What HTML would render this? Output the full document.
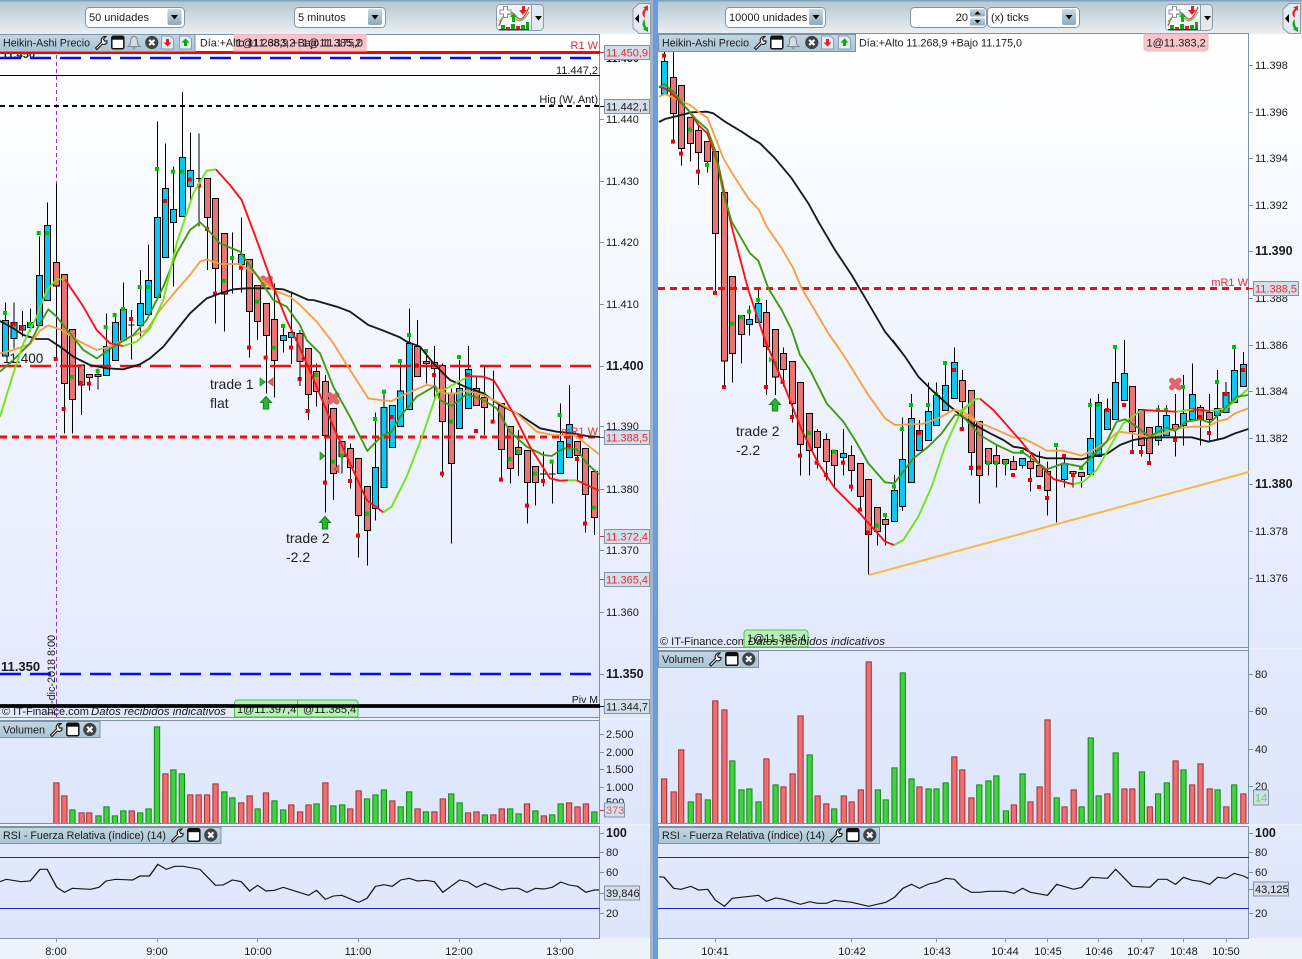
<!DOCTYPE html>
<html><head><meta charset="utf-8"><title>Chart</title>
<style>
html,body{margin:0;padding:0;background:#fff;width:1302px;height:959px;overflow:hidden}
svg{display:block;font-family:"Liberation Sans",sans-serif;font-size:11px;fill:#1a1a1a}
.r{fill:#e8282c}.b{font-weight:bold;font-size:12.5px}.t{font-size:14px;fill:#222}
.g{fill:#5ad85a}.i{font-style:italic}
.bd{stroke:#000;stroke-width:3;shape-rendering:crispEdges}
.wk{stroke:#000;stroke-width:3;fill:none;shape-rendering:crispEdges}
.mk{fill:none;stroke-width:12;stroke-linecap:square}
.ln{fill:none;stroke-width:5.6;stroke-linejoin:round}
.px{fill:#d4deea;stroke:#8094a6}
.pl{fill:none;stroke:#7d92a6}
.hd{fill:url(#hg);stroke:#7d92a6}
</style></head><body>
<svg width="1302" height="959" viewBox="0 0 1302 959" xmlns="http://www.w3.org/2000/svg">
<defs>
<linearGradient id="tg" x1="0" y1="0" x2="0" y2="1"><stop offset="0" stop-color="#b4c6d0"/><stop offset="1" stop-color="#e9f0f4"/></linearGradient>
<linearGradient id="mg" x1="0" y1="0" x2="0" y2="1"><stop offset="0" stop-color="#fff"/><stop offset=".45" stop-color="#f3f6ff"/><stop offset="1" stop-color="#e2e9fd"/></linearGradient>
<linearGradient id="vg" x1="0" y1="0" x2="0" y2="1"><stop offset="0" stop-color="#e3eafe"/><stop offset="1" stop-color="#dde6fc"/></linearGradient>
<linearGradient id="hg" x1="0" y1="0" x2="0" y2="1"><stop offset="0" stop-color="#c3d6e2"/><stop offset="1" stop-color="#a9c4d5"/></linearGradient>
<linearGradient id="dg" x1="0" y1="0" x2="0" y2="1"><stop offset="0" stop-color="#c9d9e3"/><stop offset="1" stop-color="#8daabd"/></linearGradient>
<g id="wr"><path d="M1.5 12.5L7.5 6.5C6.5 3.5 8.5 .5 12 1L9.5 3.5L10.5 5.5L13 5.5C13.5 8 11 9.5 8.5 8.5L3 14Z" fill="#fff" stroke="#222" stroke-width="1.2"/></g>
<g id="wn"><rect x=".8" y=".8" width="12" height="12.5" rx="1.5" fill="#fff" stroke="#111" stroke-width="1.5"/><rect x="1" y="1" width="11.5" height="3.2" fill="#111"/></g>
<g id="bl"><path d="M7 1C4 1 3.5 4 3.5 7C3.5 9 2.5 10 1 11H13C11.5 10 10.5 9 10.5 7C10.5 4 10 1 7 1Z" fill="#d3dce3" stroke="#7c8790"/><circle cx="7" cy="12.3" r="1.5" fill="#8d979f"/></g>
<g id="xc"><circle cx="6.8" cy="7" r="6.6" fill="#3e4347"/><path d="M4.2 4.4L9.4 9.6M9.4 4.4L4.2 9.6" stroke="#fff" stroke-width="2.2"/></g>
<g id="dn"><path d="M.5 .5H9.5L12.5 3.5V13.5H.5Z" fill="#e3ecf3" stroke="#8aa0b2"/><path d="M6.5 11L2.5 7H5V3.5H8V7H10.5Z" fill="#ec1c24"/></g>
<g id="up"><path d="M.5 .5H9.5L12.5 3.5V13.5H.5Z" fill="#e3ecf3" stroke="#8aa0b2"/><path d="M6.5 3L2.5 7H5V10.5H8V7H10.5Z" fill="#0aa80a"/></g>
<path id="ua" d="M0-6.5L5.5-.5H2.7V6H-2.7V-.5H-5.5Z" fill="#2db52d" stroke="#0b8a18"/>
<g id="ex"><path d="M-3.500-3.500L3.500 3.500M3.500-3.500L-3.500 3.500" stroke="#e0666a" stroke-width="5.600" stroke-linecap="round"/></g>
<g id="tb"><rect x=".5" y=".5" width="47" height="26" rx="4" fill="#e3ebf0" stroke="#8c9aa7"/><rect x="1" y="1" width="34" height="25" rx="3" fill="#f7f9fb"/><path d="M35.5 1V26" stroke="#8c9aa7"/><path d="M39 12h7l-3.500 4.500z" fill="#000"/>
<path d="M3 22C8 8 13 5 19 11C23 17 27 18 33 3" fill="none" stroke="#d74b4b" stroke-width="1.300"/><path d="M3 18C8 10 14 8 18 13C24 21 29 15 33 8" fill="none" stroke="#6fbf6f" stroke-width="1.300"/>
<path d="M5 21h4v4h-4zM15 20h4v5h-4zM25 21h4v4h-4zM30 18h3v7h-3z" fill="#10a510"/><path d="M10 23h4v2h-4zM20 22h4v3h-4z" fill="#d22"/><path d="M3 25.500h30" stroke="#1a2dbb"/>
<path d="M4 6h3.500V2.500h4V6H15v4h-3.500v3.500h-4V10H4z" fill="#fff" stroke="#8a8f94"/><path d="M14 13l3.500-4 3.500 4h-2v5h-3v-5z" fill="#13ad13"/><path d="M23 6h3V2h3v4h2l-4 5z" fill="#dd2222"/></g>
<g id="hn"><path d="M7 .5H18.500V30.500H7L1 25V6Z" fill="#e3ebf0" stroke="#8c9aa7"/><path d="M7 11V20L3 15.500Z" fill="#000"/><path d="M13 15C9 12 10 8 13 5.500L11 4.500L16 2.500L16 8L14.500 7C12.500 9 12.500 12 13 15Z" fill="#e02525"/><path d="M13 16C9.500 19 10 23 12.500 25.500L10.500 26L16 29L16 24L14.500 24.500C13 23 12.500 19 13 16Z" fill="#14a814"/></g>
<clipPath id="cl"><rect x="0" y="34" width="600" height="683"/></clipPath>
<clipPath id="cr"><rect x="658" y="34" width="591" height="614"/></clipPath>
<path id="lr" fill="none" d="M134 367V490M153 406V490M194 457V490M212 457V490M313 451V490M393 340V490M452 403V490M472 403V490M492 403V490M512 370V490M573 427V490M593 406V490M632 397V490M692 433V490M713 454V490M733 433V490M773 367V490M832 445V490M852 391V490M932 421V490M992 445V490M1032 454V490M1052 415V490M1112 457V490M1132 454V490M1172 463V490M1192 445V490M1252 430V490M1292 466V490M1352 427V490M1372 439V490M1392 430V490"/>
<path id="lg" fill="none" d="M172 448V490M234 466V490M253 439V490M273 466V490M293 451V490M333 457V490M353 445V490M373 199V490M412 328V490M432 340V490M533 394V490M552 412V490M612 445V490M652 421V490M673 448V490M752 430V490M792 436V490M813 433V490M872 415V490M892 403V490M912 388V490M952 439V490M972 394V490M1012 454V490M1072 400V490M1092 427V490M1152 463V490M1212 445V490M1232 460V490M1272 451V490M1312 463V490M1332 430V490M1412 454V490"/>
<path id="rr" fill="none" d="M34 445V580M57 484V580M75 358V580M117 490V580M157 211V580M179 238V580M280 385V580M321 469V580M343 430V580M362 256V580M403 496V580M424 520V580M466 496V580M485 514V580M507 478V580M526 94V580M648 469V580M732 379V580M751 418V580M773 502V580M875 523V580M915 514V580M937 469V580M956 268V580M997 529V580M1019 478V580M1100 490V580M1141 475V580M1160 475V580M1202 529V580M1264 391V580M1304 463V580M1324 400V580M1346 475V580M1386 529V580M1427 490V580"/>
<path id="rg" fill="none" d="M98 514V580M139 508V580M198 391V580M220 478V580M239 475V580M261 514V580M302 463V580M384 373V580M443 535V580M548 478V580M567 508V580M588 412V580M608 127V580M629 445V580M670 475V580M689 475V580M711 457V580M792 463V580M814 451V580M833 436V580M856 541V580M896 430V580M978 502V580M1038 529V580M1060 322V580M1079 496V580M1120 367V580M1183 424V580M1222 490V580M1243 457V580M1283 418V580M1365 478V580M1405 463V580"/>
</defs>

<!-- backgrounds -->
<rect width="1302" height="959" fill="#eef2fb"/>
<rect width="1302" height="34" fill="url(#tg)"/>
<rect width="1302" height="1.500" fill="#7fa3bf"/>
<rect x="0" y="34" width="650" height="684" fill="url(#mg)"/>
<rect x="0" y="720" width="650" height="104" fill="url(#vg)"/>
<rect x="0" y="826" width="650" height="112" fill="url(#vg)"/>
<rect x="658" y="34" width="644" height="614" fill="url(#mg)"/>
<rect x="658" y="650" width="644" height="174" fill="url(#vg)"/>
<rect x="658" y="826" width="644" height="112" fill="url(#vg)"/>
<path class="pl" d="M0 717.500H600M0 720.500H600M0 826.500H600M0 938.500H600M599.500 34V938M658 33.500H1249M658 647.500H1249M658 650.500H1249M658 826.500H1249M658 938.500H1249M1248.500 34V938"/>
<path d="M0 34.500H600" stroke="#7d92a6"/>
<rect x="650" y="0" width="3" height="959" fill="#a3b4c3"/>
<rect x="653" y="0" width="5" height="959" fill="#6c9be6"/>

<!-- left main chart -->
<g clip-path="url(#cl)">
<text x="2" y="58" font-weight="bold">11.450</text>
<path d="M56.500 34V717" stroke="#9a2fd0" stroke-dasharray="4 3" fill="none"/>
<text x="3" y="363" font-size="13.500">11.400</text>
<text x="1" y="671" font-size="13" font-weight="bold">11.350</text>
<path d="M0 75.500H600" stroke="#000"/>
<path d="M0 106H600" stroke="#000" stroke-width="2" stroke-dasharray="5 4"/>
<g transform="translate(0,120) scale(.33333)">
<path class="wk" d="M17 547V602M42 547V685M67 573V650M92 565V635M118 350V466M143 247V316M169 190V717M193 790V940M218 838V940M244 795V885M268 773V812M294 745V808M319 580V766M346 580V721M370 487V660M394 570V718M421 450V650M445 373V583M472 5V532M496 70V412M520 140V500M547 -84V290M571 37V240M597 40V320M622 176V450M646 445V610M673 522V635M697 337V520M724 292V518M748 574V713M772 604V660M799 550V820M823 490V833M850 612V698M874 520V732M385 615h18M588 175h18"/>
<path class="bd" fill="#e87474" d="M160 428h18V498h-18zM184 463h18V790h-18zM209 628h18V838h-18zM235 735h18V795h-18zM259 763h18V773h-18zM613 176h18V293h-18zM637 235h18V445h-18zM664 340h18V522h-18zM739 418h18V574h-18zM763 496h18V604h-18zM790 550h18V646h-18zM814 598h18V721h-18z"/>
<path class="bd" fill="#0ec6f6" d="M8 602h18V708h-18zM33 608h18V655h-18zM58 616h18V630h-18zM83 607h18V622h-18zM109 466h18V616h-18zM134 316h18V542h-18zM285 763h18V769h-18zM310 680h18V766h-18zM337 607h18V721h-18zM361 568h18V660h-18zM412 550h18V616h-18zM436 481h18V583h-18zM463 292h18V532h-18zM487 205h18V412h-18zM511 268h18V307h-18zM538 112h18V290h-18zM562 152h18V199h-18zM715 404h18V433h-18zM841 646h18V661h-18zM865 637h18V652h-18z"/>
<use href="#ex" transform="translate(800,485) scale(3)"/>
<path class="mk" stroke="#00c000" d="M15 579h.01M90 612h.01M116 339h.01M141 339h.01M215 771h.01M293 753h.01M317 621h.01M344 585h.01M369 567h.01M419 501h.01M443 501h.01M471 147h.01M519 155h.01M545 155h.01M671 483h.01M696 414h.01M771 545h.01M821 683h.01M849 618h.01M947 765h.01"/>
<path class="mk" stroke="#f00000" d="M41 613h.01M65 621h.01M167 717h.01M191 867h.01M242 789h.01M267 791h.01M393 597h.01M495 243h.01M569 179h.01M597 197h.01M621 327h.01M645 521h.01M723 443h.01M747 683h.01M797 713h.01M873 683h.01M899 777h.01M923 873h.01"/>
</g>
<g transform="translate(300,300) scale(.33333)">
<path class="wk" d="M0 90V258M25 283V360M50 190V320M76 225V638M100 520V600M126 470V520M151 430V565M176 646V773M202 691V797M227 337V662M252 270V322M302 180V273M328 25V130M352 60V140M379 150V250M403 138V305M428 190V533M454 265V730M479 180V265M505 138V208M529 230V265M553 200V405M580 212V370M604 448V540M631 505V550M655 390V528M682 547V670M706 547V617M731 455V560M757 490V610M781 310V424M808 255V373M832 466V540M857 583V698M883 652V705M720 522h22M747 522h20"/>
<path class="bd" fill="#e87474" d="M-9 100h18V185h-18zM16 145h18V283h-18zM41 214h18V275h-18zM67 244h18V407h-18zM91 325h18V520h-18zM117 424h18V470h-18zM142 445h18V502h-18zM167 475h18V646h-18zM193 559h18V691h-18zM343 140h18V229h-18zM370 184h18V190h-18zM394 188h18V205h-18zM419 196h18V364h-18zM445 280h18V490h-18zM520 265h18V317h-18zM544 292h18V322h-18zM595 310h18V448h-18zM622 380h18V505h-18zM646 442h18V463h-18zM673 451h18V547h-18zM697 499h18V547h-18zM823 424h18V466h-18zM848 445h18V583h-18zM874 514h18V652h-18z"/>
<path class="bd" fill="#0ec6f6" d="M218 502h18V625h-18zM243 322h18V562h-18zM268 316h18V442h-18zM293 273h18V379h-18zM319 130h18V328h-18zM470 265h18V385h-18zM496 208h18V325h-18zM772 424h18V521h-18zM799 373h18V472h-18z"/>
<use href="#ex" transform="translate(100,295) scale(3)"/>
<path class="mk" stroke="#00c000" d="M47 225h.01M99 485h.01M125 467h.01M201 641h.01M225 357h.01M252 275h.01M300 183h.01M327 105h.01M378 153h.01M453 365h.01M477 171h.01M551 282h.01M629 477h.01M653 455h.01M705 521h.01M755 485h.01M779 345h.01M881 623h.01"/>
<path class="mk" stroke="#f00000" d="M23 333h.01M75 548h.01M150 543h.01M174 707h.01M275 351h.01M351 197h.01M402 225h.01M426 521h.01M503 225h.01M528 393h.01M578 365h.01M603 539h.01M681 617h.01M729 543h.01M807 437h.01M831 477h.01M855 671h.01"/>
</g>
<path d="M0 52.500H600" stroke="#f00" stroke-width="3"/>
<path d="M0 58H600" stroke="#0a0af0" stroke-width="2.400" stroke-dasharray="21 9"/>
<path d="M0 366H600" stroke="#ee1010" stroke-width="2.400" stroke-dasharray="21 9"/>
<path d="M0 437H600" stroke="#ee1010" stroke-width="3" stroke-dasharray="7 5"/>
<path d="M0 674H600" stroke="#0a0af0" stroke-width="2.400" stroke-dasharray="21 9"/>
<path d="M0 706H600" stroke="#000" stroke-width="3.400"/>
<g transform="translate(0,120) scale(.33333)">
<polyline class="ln" stroke="#1a1a1a" points="0,603 40,625 70,645 110,657 145,657 180,680 220,710 270,735 320,745 370,748 420,733 450,715 490,680 530,630 570,580 620,535 660,520 700,508 740,505 800,505 850,508 880,520 925,540"/>
<polyline class="ln" stroke="#fb9f3e" points="0,700 40,690 90,672 120,632 145,616 185,630 240,665 290,690 330,680 380,655 440,630 480,570 530,510 570,465 600,425 620,418 660,432 720,432 770,465 820,510 870,530 900,555"/>
<polyline class="ln" stroke="#3f9a0c" points="0,755 40,720 90,670 120,610 145,568 170,590 210,640 250,690 290,715 340,680 400,645 440,600 490,500 530,400 570,330 600,307 620,325 660,370 720,395 770,465 820,540 860,560 900,615"/>
<polyline class="ln" stroke="#6fe514" points="0,890 40,760 70,670 110,590 140,510 170,478 195,478"/>
<polyline class="ln" stroke="#ff1010" points="195,478 250,560 290,630 330,670 370,678"/>
<polyline class="ln" stroke="#6fe514" points="370,678 410,665 450,625 490,540 530,370 580,220 620,152 648,148"/>
<polyline class="ln" stroke="#ff1010" points="648,148 690,195 725,240 770,360 820,500 860,600 900,685"/>
</g>
<g transform="translate(300,300) scale(.33333)">
<polyline class="ln" stroke="#1a1a1a" points="25,0 40,0 110,20 150,35 205,75 250,92 300,112 320,125 360,140 400,190 450,240 500,262 550,280 600,315 660,345 720,385 770,395 820,400 860,408 900,411"/>
<polyline class="ln" stroke="#fb9f3e" points="0,15 50,65 100,130 150,210 205,295 240,300 275,303 320,280 380,255 405,258 430,280 470,280 500,272 550,285 600,310 650,340 710,395 760,405 820,405 850,425 897,463"/>
<polyline class="ln" stroke="#3f9a0c" points="0,75 20,120 60,160 100,260 150,350 202,453 245,408 275,395 300,350 350,290 405,258 420,300 455,318 500,282 550,300 590,325 630,395 680,440 730,465 755,468 790,445 830,447 860,490 897,523"/>
<polyline class="ln" stroke="#ff1010" points="0,145 50,260 100,380 150,490 200,600 250,637"/>
<polyline class="ln" stroke="#6fe514" points="250,637 275,620 320,530 370,400 410,280 440,265 500,232"/>
<polyline class="ln" stroke="#ff1010" points="500,228 550,230 582,242 640,340 690,440 750,535 780,542 805,541"/>
<polyline class="ln" stroke="#6fe514" points="805,541 830,541"/>
<polyline class="ln" stroke="#ff1010" points="830,541 897,572"/>
</g>
<use href="#ua" x="266" y="403"/><use href="#ua" x="325" y="523"/>
<path d="M260 378l5.500 4-5.500 4zM320 452l5 4-5 4z" fill="#2db52d" stroke="#0b8a18" stroke-width=".6"/>
<path d="M273 378l-5 4 5 4zM339 465l-5 4 5 4z" fill="#e46060" stroke="#b03030" stroke-width=".6"/>
<text class="t" x="210" y="389">trade 1</text><text class="t" x="210" y="408">flat</text>
<text class="t" x="286" y="543">trade 2</text><text class="t" x="286" y="562">-2.2</text>
<text x="598" y="49" text-anchor="end" class="r">R1 W</text>
<text x="598" y="74" text-anchor="end">11.447,2</text>
<text x="598" y="103" text-anchor="end">Hig (W, Ant)</text>
<text x="598" y="435" text-anchor="end" class="r">mR1 W</text>
<text x="598" y="703" text-anchor="end" font-size="10.500">Piv M</text>
<text transform="translate(55,716) rotate(-90)" font-size="10.800">13-dic-2018 8:00</text>
<text x="2" y="715">© IT-Finance.com</text><text class="i" x="91" y="715" textLength="135" lengthAdjust="spacingAndGlyphs">Datos recibidos indicativos</text>
<path d="M234.500 717V703a3 3 0 0 1 3-3H355a3 3 0 0 1 3 3V717ZM297.500 700V717" fill="#b9efb9" stroke="#4cc04c"/>
<text x="237" y="713">1@11.397,4</text><text x="303" y="713">@11.385,4</text>
<path d="M0 706H600" stroke="#000" stroke-width="3.400"/>
<path d="M56.500 700V717" stroke="#9a2fd0" stroke-dasharray="4 3"/>
</g>

<!-- left axis -->
<path class="pl" d="M600 119.500h4M600 181.500h4M600 242.500h4M600 304.500h4M600 366.500h4M600 426.500h4M600 489.500h4M600 550.500h4M600 612.500h4M600 674.500h4M600 734.500h4M600 752.500h4M600 769.500h4M600 787.500h4M600 833.500h4M600 852.500h4M600 872.500h4M600 893.500h4M600 913.500h4"/>
<path d="M600 52.500h4M600 437.500h4M600 536.500h4M600 579.500h4M600 810.500h4" stroke="#e8282c"/>
<path d="M600 106.500h4M600 706.500h4" stroke="#000"/>
<text x="606" y="62" font-weight="bold">11.450</text>
<text x="606" y="123">11.440</text><text x="606" y="185">11.430</text><text x="606" y="246">11.420</text><text x="606" y="308">11.410</text>
<text class="b" x="606" y="370">11.400</text><text x="606" y="430">11.390</text><text x="606" y="493">11.380</text><text x="606" y="554">11.370</text><text x="606" y="616">11.360</text>
<text class="b" x="606" y="678">11.350</text>
<rect class="px" x="604.500" y="45.500" width="45" height="14"/><text x="606" y="56.500" class="r">11.450,9</text>
<rect class="px" x="604.500" y="99.500" width="45" height="14"/><text x="606" y="110.500">11.442,1</text>
<rect class="px" x="604.500" y="430.500" width="45" height="14"/><text x="606" y="441.500" class="r">11.388,5</text>
<rect class="px" x="604.500" y="529.500" width="45" height="14"/><text x="606" y="540.500" class="r">11.372,4</text>
<rect class="px" x="604.500" y="572.500" width="45" height="14"/><text x="606" y="583.500" class="r">11.365,4</text>
<rect class="px" x="604.500" y="699.500" width="45" height="14"/><text x="606" y="710.500">11.344,7</text>
<text x="606" y="738">2.500</text><text x="606" y="756">2.000</text><text x="606" y="773">1.500</text><text x="606" y="791">1.000</text><text x="606" y="806">500</text>
<rect class="px" x="604.500" y="803" width="20" height="14"/><text x="606" y="814" style="fill:#e25a5a">373</text>
<text x="606" y="837" class="b">100</text><text x="606" y="856">80</text><text x="606" y="876">60</text><text x="606" y="917">20</text>
<rect class="px" x="604.500" y="886" width="35" height="14"/><text x="606" y="897">39,846</text>
<path d="M56.500 938v4M157.500 938v4M257.500 938v4M358.500 938v4M459.500 938v4M560.500 938v4" stroke="#7d92a6"/>
<g text-anchor="middle"><text x="56" y="955">8:00</text><text x="157" y="955">9:00</text><text x="258" y="955">10:00</text><text x="358" y="955">11:00</text><text x="459" y="955">12:00</text><text x="560" y="955">13:00</text></g>

<!-- left volume + rsi -->
<g transform="translate(0,660) scale(.42092,.33333)">
<use href="#lr" stroke="#a43434" stroke-width="15"/>
<use href="#lr" stroke="#ee6f6f" stroke-width="10" transform="translate(0,3)"/>
<use href="#lg" stroke="#178a17" stroke-width="15"/>
<use href="#lg" stroke="#40d040" stroke-width="10" transform="translate(0,3)"/>
<polyline fill="none" stroke="#1a1a1a" stroke-width="3.400" points="0,665 15,658 50,665 72,663 95,628 112,628 135,682 153,697 172,685 215,688 235,682 252,663 275,658 315,660 333,648 355,648 375,613 395,628 415,619 435,619 475,628 512,676 530,675 552,660 573,665 593,693 612,676 632,693 652,691 673,682 733,706 752,691 773,718 792,708 812,706 852,727 872,715 892,679 912,674 932,679 952,660 972,655 992,663 1012,661 1032,665 1052,697 1092,660 1112,666 1132,682 1152,670 1192,690 1212,685 1232,685 1252,697 1272,685 1292,687 1312,682 1332,666 1352,675 1372,679 1392,697 1412,690 1423,690"/>
</g>
<path d="M0 857.500H600M0 908.500H600" stroke="#2222cc"/>
<path class="pl" d="M0 823.500H600"/>
<rect x="0" y="824" width="600" height="2" fill="#eef2fb"/>

<!-- right main chart -->
<g clip-path="url(#cr)">
<g transform="translate(655,50) scale(.33333)">
<path class="wk" d="M28 -20V34M55 0V270M79 295V347M106 281V335M130 228V405M157 334V368M181 550V730M208 933V1010M232 910V998M259 853V940M283 766V857M310 720V760M334 750V1035M361 981V1035"/>
<path class="bd" fill="#e87474" d="M46 82h18V190h-18zM70 106h18V295h-18zM97 202h18V281h-18zM121 241h18V307h-18zM148 274h18V334h-18zM172 304h18V550h-18zM199 427h18V933h-18zM223 679h18V910h-18zM250 796h18V853h-18zM325 787h18V890h-18zM352 838h18V981h-18z"/>
<path class="bd" fill="#0ec6f6" d="M19 34h18V132h-18zM274 808h18V823h-18zM301 760h18V817h-18z"/>
<path class="mk" stroke="#f00000" d="M27 17h.01M54 275h.01M78 311h.01M129 365h.01M180 729h.01"/>
<path class="mk" stroke="#00c000" d="M105 239h.01M156 345h.01M231 821h.01M258 801h.01M282 785h.01M309 750h.01"/>
</g>
<g transform="translate(655,340) scale(.33333)">
<path class="wk" d="M385 22V140M412 190V248M436 313V407M463 331V407M487 267V386M514 280V422M538 376V440M565 267V407M589 316V455M616 469V510M640 583V703M667 574V617M691 525V617M718 405V451M742 232V513M769 162V235M793 240V271M820 128V214M844 128V166M871 75V136M898 22V68M922 90V262M949 337V407"/>
<path class="bd" fill="#e87474" d="M376 40h18V88h-18zM403 64h18V190h-18zM427 127h18V313h-18zM454 220h18V331h-18zM478 274h18V322h-18zM505 298h18V364h-18zM529 331h18V376h-18zM580 346h18V391h-18zM607 370h18V469h-18zM631 418h18V583h-18zM658 502h18V574h-18zM682 538h18V553h-18zM913 121h18V184h-18zM940 151h18V337h-18z"/>
<path class="bd" fill="#0ec6f6" d="M556 340h18V352h-18zM709 451h18V544h-18zM733 358h18V499h-18zM760 235h18V427h-18zM784 271h18V331h-18zM811 214h18V301h-18zM835 166h18V256h-18zM862 136h18V211h-18zM889 68h18V175h-18z"/>
<path d="M342 50l12 9-12 9z" fill="#2db52d"/>
<path class="mk" stroke="#f00000" d="M207 141h.01M333 141h.01M383 126h.01M411 231h.01M435 347h.01M485 368h.01M513 405h.01M564 368h.01M588 440h.01M615 509h.01M639 578h.01M792 279h.01M897 90h.01M921 267h.01M948 384h.01"/>
<path class="mk" stroke="#00c000" d="M360 69h.01M461 279h.01M537 335h.01M665 557h.01M690 525h.01M717 440h.01M741 267h.01M768 195h.01M819 195h.01M843 162h.01M870 69h.01"/>
</g>
<g transform="translate(960,330) scale(.33333)">
<path class="wk" d="M59 436V521M85 400V437M110 345V473M136 400V437M160 378V394M187 406V416M211 375V485M238 365V406M262 395V557M289 352V578M313 378V473M339 430V473M364 439V473M391 205V325M415 192V217M442 205V238M466 55V157M493 30V130M517 304V365M544 346V380M568 370V405M595 225V347M619 225V256M646 192V380M670 135V347M697 100V193M721 225V347M748 192V335M772 120V330M798 156V187M823 48V121M850 66V103"/>
<path class="bd" fill="#e87474" d="M50 274h18V436h-18zM76 355h18V400h-18zM101 376h18V400h-18zM127 388h18V400h-18zM151 394h18V418h-18zM202 394h18V415h-18zM229 406h18V439h-18zM253 424h18V481h-18zM330 424h18V430h-18zM355 427h18V439h-18zM508 169h18V304h-18zM535 238h18V346h-18zM559 292h18V370h-18zM637 283h18V295h-18zM712 232h18V268h-18zM739 247h18V268h-18z"/>
<path class="bd" fill="#0ec6f6" d="M178 385h18V406h-18zM304 400h18V448h-18zM382 325h18V433h-18zM406 217h18V379h-18zM433 238h18V298h-18zM457 157h18V268h-18zM484 130h18V211h-18zM586 289h18V331h-18zM610 256h18V316h-18zM661 250h18V286h-18zM688 193h18V268h-18zM763 235h18V256h-18zM789 187h18V247h-18zM814 121h18V217h-18zM841 103h18V169h-18z"/>
<use href="#ex" transform="translate(646,162) scale(3)"/>
<path class="mk" stroke="#f00000" d="M5 297h.01M33 413h.01M57 413h.01M159 435h.01M210 450h.01M237 471h.01M261 504h.01M312 378h.01M339 435h.01M441 240h.01M492 225h.01M516 366h.01M543 366h.01M567 399h.01M645 330h.01M696 240h.01M720 261h.01M747 309h.01M797 192h.01M849 120h.01"/>
<path class="mk" stroke="#00c000" d="M84 399h.01M108 399h.01M135 399h.01M186 366h.01M288 345h.01M363 414h.01M390 225h.01M414 225h.01M465 51h.01M594 240h.01M618 240h.01M669 171h.01M771 156h.01M822 51h.01"/>
</g>
<path d="M658 288.500H1249" stroke="#ee1010" stroke-width="3" stroke-dasharray="7 5"/>
<path d="M869 575L1249 472" stroke="#fbb83e" stroke-width="2" fill="none"/>
<g transform="translate(655,50) scale(.33333)">
<polyline class="ln" stroke="#1a1a1a" points="12,216 30,207 70,197 110,187 155,185 175,190 210,215 260,245 290,265 315,280 360,325 410,385 460,460 490,515 540,600 590,675 640,760 690,845 735,900"/>
<polyline class="ln" stroke="#fb9f3e" points="12,140 30,132 70,150 105,165 130,185 157,203 180,260 205,325 235,375 280,445 312,480 335,530 380,595 415,655 440,715 470,765 520,850 555,900"/>
<polyline class="ln" stroke="#ff1010" points="12,110 40,120 100,180 130,225 157,250 190,345 230,530 280,720 340,900"/>
<polyline class="ln" stroke="#3f9a0c" points="12,112 28,102 60,130 90,170 125,210 157,238 180,300 205,430 230,515 285,610 310,632 340,715 380,780 410,840 430,900"/>
</g>
<g transform="translate(655,340) scale(.33333)">
<polyline class="ln" stroke="#1a1a1a" points="712,0 750,50 790,110 830,150 880,195 910,220 960,260"/>
<polyline class="ln" stroke="#fb9f3e" points="535,0 575,60 640,165 690,235 720,255 760,253 800,252 850,235 895,210 925,215 960,238"/>
<polyline class="ln" stroke="#ff1010" points="330,0 385,130 440,270 490,370 540,445 610,515 690,605 718,615"/>
<polyline class="ln" stroke="#6fe514" points="718,615 745,600 790,530 830,440 870,320 920,210 960,178"/>
<polyline class="ln" stroke="#3f9a0c" points="420,0 435,45 465,90 515,190 565,245 600,300 640,370 690,427 718,430 775,355 820,320 860,280 900,225 920,225 960,268"/>
</g>
<g transform="translate(960,330) scale(.33333)">
<polyline class="ln" stroke="#1a1a1a" points="0,255 45,285 90,310 130,330 160,350 190,355 230,378 260,385 310,385 365,388 400,378 440,372 480,345 520,330 560,323 600,322 695,322 745,335 790,325 825,310 865,297"/>
<polyline class="ln" stroke="#fb9f3e" points="0,250 50,275 100,295 160,322 190,325 230,345 260,362 310,362 365,377 400,360 440,335 475,305 515,310 560,320 610,310 650,295 700,290 745,290 770,275 800,268 825,250 865,235"/>
<polyline class="ln" stroke="#ff1010" points="60,206 100,240 180,330 240,405 280,447 340,463"/>
<polyline class="ln" stroke="#6fe514" points="340,463 370,455 410,420 450,350 490,280 545,240"/>
<polyline class="ln" stroke="#ff1010" points="545,240 650,245"/>
<polyline class="ln" stroke="#6fe514" points="650,245 700,238"/>
<polyline class="ln" stroke="#ff1010" points="700,238 750,243"/>
<polyline class="ln" stroke="#6fe514" points="750,243 800,235 865,175"/>
<polyline class="ln" stroke="#6fe514" points="0,250 45,208 60,206"/>
<polyline class="ln" stroke="#3f9a0c" points="0,250 60,315 110,345 160,368 190,368 260,418 310,400 365,410 400,375 440,335 470,275 495,268 530,290 568,320 620,292 645,303 680,275 720,268 750,278 790,240 830,200 865,195"/>
</g>
<use href="#ua" x="775" y="405"/>
<text class="t" x="736" y="436">trade 2</text><text class="t" x="736" y="455">-2.2</text>
<text x="1248" y="286" text-anchor="end" class="r">mR1 W</text>
<text x="660" y="645">© IT-Finance.com</text>
<path d="M744 647V633a3 3 0 0 1 3-3H805a3 3 0 0 1 3 3V647Z" fill="#b9efb9" stroke="#4cc04c"/>
<text x="747" y="642">1@11.385,4</text>
<text class="i" x="748" y="645" textLength="137" lengthAdjust="spacingAndGlyphs">Datos recibidos indicativos</text>
</g>

<!-- right axis -->
<path class="pl" d="M1249 65.500h4M1249 112.500h4M1249 158.500h4M1249 205.500h4M1249 251.500h4M1249 298.500h4M1249 345.500h4M1249 391.500h4M1249 438.500h4M1249 484.500h4M1249 531.500h4M1249 578.500h4M1249 674.500h4M1249 711.500h4M1249 749.500h4M1249 786.500h4M1249 833.500h4M1249 852.500h4M1249 872.500h4M1249 889.500h4M1249 913.500h4"/>
<path d="M1249 288.500h4" stroke="#e8282c"/>
<text x="1255" y="69">11.398</text><text x="1255" y="116">11.396</text><text x="1255" y="162">11.394</text><text x="1255" y="209">11.392</text>
<text class="b" x="1255" y="255">11.390</text><text x="1255" y="302">11.388</text><text x="1255" y="349">11.386</text><text x="1255" y="395">11.384</text><text x="1255" y="442">11.382</text>
<text class="b" x="1255" y="488">11.380</text><text x="1255" y="535">11.378</text><text x="1255" y="582">11.376</text>
<rect class="px" x="1253.500" y="281.500" width="45" height="14"/><text x="1255" y="292.500" class="r">11.388,5</text>
<text x="1255" y="678">80</text><text x="1255" y="715">60</text><text x="1255" y="753">40</text><text x="1255" y="790">20</text>
<rect class="px" x="1253.500" y="790" width="15" height="15"/><text x="1255" y="801.500" class="g">14</text>
<text x="1255" y="837" class="b">100</text><text x="1255" y="856">80</text><text x="1255" y="876">60</text><text x="1255" y="917">20</text>
<rect class="px" x="1253.500" y="882" width="35" height="14"/><text x="1255" y="893">43,125</text>
<path d="M715.500 938v4M851.500 938v4M936.500 938v4M1005.500 938v4M1047.500 938v4M1098.500 938v4M1141.500 938v4M1183.500 938v4M1226.500 938v4" stroke="#7d92a6"/>
<g text-anchor="middle"><text x="715" y="955">10:41</text><text x="852" y="955">10:42</text><text x="937" y="955">10:43</text><text x="1005" y="955">10:44</text><text x="1048" y="955">10:45</text><text x="1099" y="955">10:46</text><text x="1141" y="955">10:47</text><text x="1184" y="955">10:48</text><text x="1226" y="955">10:50</text></g>

<!-- right volume + rsi -->
<g transform="translate(650,630) scale(.41580,.33333)">
<use href="#rr" stroke="#a43434" stroke-width="15"/>
<use href="#rr" stroke="#ee6f6f" stroke-width="10" transform="translate(0,3)"/>
<use href="#rg" stroke="#178a17" stroke-width="15"/>
<use href="#rg" stroke="#40d040" stroke-width="10" transform="translate(0,3)"/>
<polyline fill="none" stroke="#1a1a1a" stroke-width="3.400" points="22,740 34,742 57,775 75,778 98,769 117,780 139,778 157,810 179,829 198,805 261,796 280,814 302,804 321,808 362,823 384,815 403,820 424,820 443,811 485,817 526,829 567,817 588,802 608,775 629,763 648,775 670,762 689,757 711,745 732,748 751,772 773,787 792,787 814,784 856,784 875,790 896,775 915,787 956,796 978,763 1019,778 1038,772 1060,742 1100,745 1120,718 1160,769 1202,772 1222,748 1243,748 1264,763 1283,742 1304,751 1324,754 1346,763 1365,742 1386,745 1405,730 1427,738 1439,745"/>
</g>
<path d="M658 857.500H1249M658 908.500H1249" stroke="#2222cc"/>
<path class="pl" d="M658 823.500H1249"/>
<rect x="658" y="824" width="591" height="2" fill="#eef2fb"/>

<!-- headers -->
<rect x="-1" y="34.500" width="196" height="17" class="hd"/>
<text x="3" y="46.500" textLength="87" lengthAdjust="spacingAndGlyphs">Heikin-Ashi Precio</text>
<use href="#wr" x="94" y="35.500"/><use href="#wn" x="111" y="35.500"/><use href="#bl" x="127" y="35.500"/><use href="#xc" x="145" y="35.500"/><use href="#dn" x="161" y="35.500"/><use href="#up" x="179" y="35.500"/>
<path d="M234 34.500H366V51H234ZM300 34.500V51" fill="#f6c6cb" stroke="#f2b5bb"/>
<text x="200" y="46.500" textLength="163" lengthAdjust="spacingAndGlyphs">Día:+Alto 11.268,9 +Bajo 11.175,0</text>
<text x="236" y="46.500">1@11.383,2</text><text x="302" y="46.500">1@11.385,2</text>

<rect x="658.500" y="34.500" width="197" height="17" class="hd"/>
<text x="662" y="46.500" textLength="87" lengthAdjust="spacingAndGlyphs">Heikin-Ashi Precio</text>
<use href="#wr" x="753" y="35.500"/><use href="#wn" x="770" y="35.500"/><use href="#bl" x="786" y="35.500"/><use href="#xc" x="805" y="35.500"/><use href="#dn" x="821" y="35.500"/><use href="#up" x="838" y="35.500"/>
<text x="859" y="46.500" textLength="163" lengthAdjust="spacingAndGlyphs">Día:+Alto 11.268,9 +Bajo 11.175,0</text>
<path d="M1144 34H1208V48a3 3 0 0 1-3 3H1147a3 3 0 0 1-3-3Z" fill="#f6c6cb" stroke="#f2b5bb"/>
<text x="1146.500" y="46.500">1@11.383,2</text>

<rect x="-1" y="721.500" width="101" height="16" class="hd"/><text x="3" y="733.500" textLength="42" lengthAdjust="spacingAndGlyphs">Volumen</text>
<use href="#wr" x="49" y="722.500"/><use href="#wn" x="66" y="722.500"/><use href="#xc" x="83" y="722.500"/>
<rect x="-1" y="827.500" width="222" height="16" class="hd"/><text x="3" y="839" textLength="163" lengthAdjust="spacingAndGlyphs">RSI - Fuerza Relativa (índice) (14)</text>
<use href="#wr" x="170" y="828"/><use href="#wn" x="187" y="828"/><use href="#xc" x="204" y="828"/>
<rect x="658.500" y="651.500" width="100" height="16" class="hd"/><text x="662" y="663" textLength="42" lengthAdjust="spacingAndGlyphs">Volumen</text>
<use href="#wr" x="708" y="652"/><use href="#wn" x="725" y="652"/><use href="#xc" x="742" y="652"/>
<rect x="658.500" y="827.500" width="221" height="16" class="hd"/><text x="662" y="839" textLength="163" lengthAdjust="spacingAndGlyphs">RSI - Fuerza Relativa (índice) (14)</text>
<use href="#wr" x="829" y="828"/><use href="#wn" x="846" y="828"/><use href="#xc" x="863" y="828"/>

<!-- toolbars -->
<rect x="85.500" y="7.500" width="99" height="20" rx="4" fill="#fff" stroke="#85929f"/><text x="89" y="21">50 unidades</text>
<rect x="167.500" y="9" width="14" height="16" rx="2" fill="url(#dg)"/><path d="M171 15h7l-3.500 4.500z" fill="#000"/>
<rect x="294.500" y="7.500" width="91" height="20" rx="4" fill="#fff" stroke="#85929f"/><text x="298" y="21">5 minutos</text>
<rect x="368" y="9" width="14" height="16" rx="2" fill="url(#dg)"/><path d="M371.500 15h7l-3.500 4.500z" fill="#000"/>
<use href="#tb" x="496" y="4"/><use href="#hn" x="632" y="3"/>
<rect x="725.500" y="7.500" width="100" height="20" rx="4" fill="#fff" stroke="#85929f"/><text x="729" y="21">10000 unidades</text>
<rect x="809" y="9" width="14" height="16" rx="2" fill="url(#dg)"/><path d="M812.500 15h7l-3.500 4.500z" fill="#000"/>
<rect x="910.500" y="7.500" width="76" height="20" rx="4" fill="#fff" stroke="#85929f"/><text x="968" y="21" text-anchor="end">20</text>
<rect x="970" y="9" width="15" height="7.500" rx="1" fill="url(#dg)"/><rect x="970" y="18" width="15" height="7.500" rx="1" fill="url(#dg)"/><path d="M974.500 14.500l3-3.500 3 3.500zM974.500 20l3 3.500 3-3.500z" fill="#000"/>
<rect x="987.500" y="7.500" width="92" height="20" rx="4" fill="#fff" stroke="#85929f"/><text x="991" y="21">(x) ticks</text>
<rect x="1062" y="9" width="14" height="16" rx="2" fill="url(#dg)"/><path d="M1065.500 15h7l-3.500 4.500z" fill="#000"/>
<use href="#tb" x="1165" y="4"/><use href="#hn" x="1282" y="3"/>
</svg>
</body></html>
